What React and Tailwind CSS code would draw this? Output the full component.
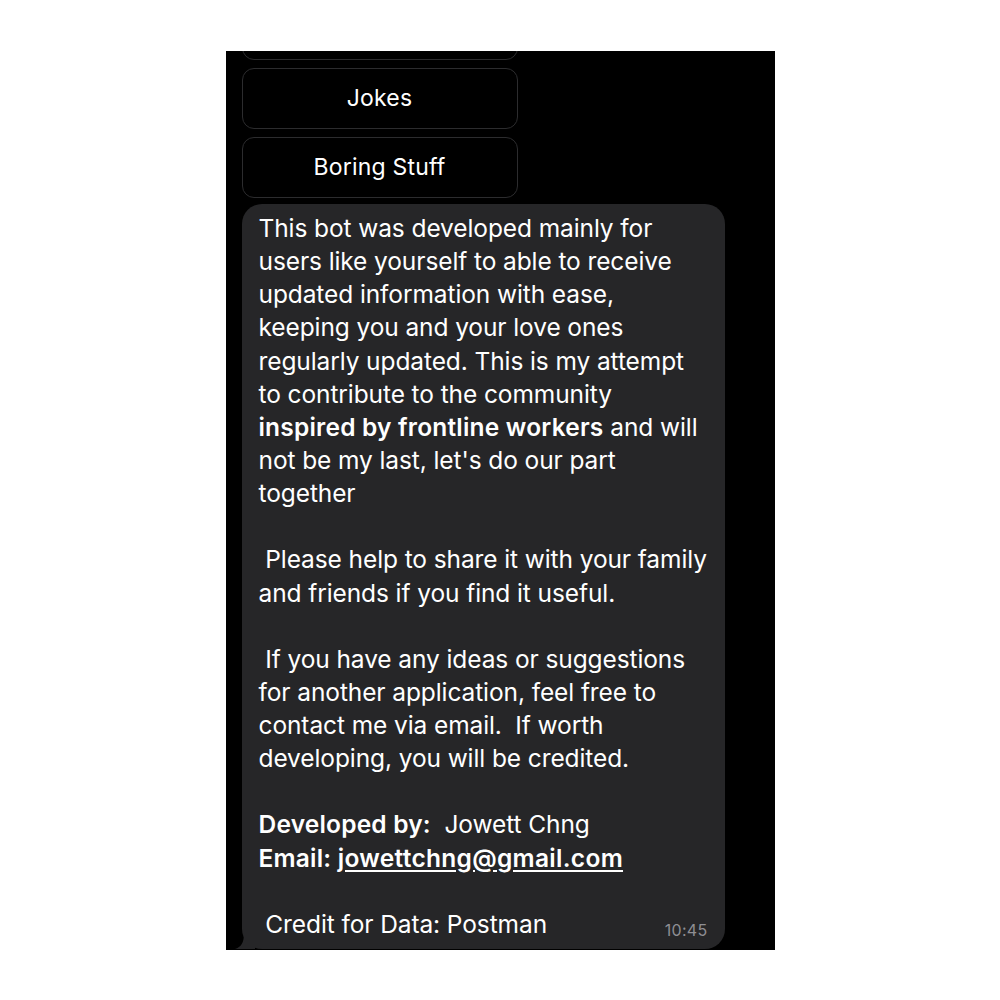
import React from "react";

const font = { fontFamily: '"Inter", "Roboto", sans-serif' };

function ReplyButton({ label }) {
  return (
    <div className="w-[276px] h-[61px] shrink-0 rounded-[12px] border border-[#2c2c2e] bg-black flex items-center justify-center text-white text-[23px] tracking-[0.2px]">
      {label}
    </div>
  );
}

export default function App() {
  return (
    <div className="min-h-screen bg-white flex justify-center pt-[51px]" style={font}>
      <div className="w-[549px] h-[899px] bg-black overflow-hidden flex flex-col">
        {/* Quick replies */}
        <div className="flex flex-col gap-2 pl-4 -mt-[52px]">
          <ReplyButton label="" />
          <ReplyButton label="Jokes" />
          <ReplyButton label="Boring Stuff" />
        </div>

        {/* Message bubble */}
        <div className="relative ml-4 mt-[6px] w-[483px]">
          <div className="bg-[#262628] rounded-[20px] pl-[17px] pr-3 pt-[8px] pb-[8px] text-white text-[24.5px] leading-[33.15px] tracking-[-0.1px] whitespace-nowrap">
            <p>
              This bot was developed mainly for<br />
              users like yourself to able to receive<br />
              updated information with ease,<br />
              keeping you and your love ones<br />
              regularly updated. This is my attempt<br />
              to contribute to the community<br />
              <b className="font-semibold tracking-[0.2px]">inspired by frontline workers</b> and will<br />
              not be my last, let's do our part<br />
              together
            </p>
            <p className="mt-[33px]">
              &nbsp;Please help to share it with your family<br />
              and friends if you find it useful.
            </p>
            <p className="mt-[33px]">
              &nbsp;If you have any ideas or suggestions<br />
              for another application, feel free to<br />
              contact me via email.&nbsp; If worth<br />
              developing, you will be credited.
            </p>
            <p className="mt-[33px]">
              <b className="font-semibold tracking-[0.2px]">Developed by:</b>&nbsp; Jowett Chng
            </p>
            <p>
              <b className="font-semibold tracking-[0.2px]">Email: </b>
              <span className="font-semibold tracking-[0.3px] underline underline-offset-[3px]">jowettchng@gmail.com</span>
            </p>
            <div className="mt-[33px] flex items-end justify-between">
              <span>&nbsp;Credit for Data: Postman</span>
              <span className="text-[16px] leading-[20px] tracking-[0.3px] text-[#8e8e93] mb-[1px] mr-[5px]">10:45</span>
            </div>
          </div>
          <svg className="absolute left-[-7px] bottom-0" width="20" height="16" viewBox="0 0 20 16">
            <path d="M20 0 L20 16 L0 16 C6 14 9 10 9 0 Z" fill="#262628" />
          </svg>
        </div>
      </div>
    </div>
  );
}
